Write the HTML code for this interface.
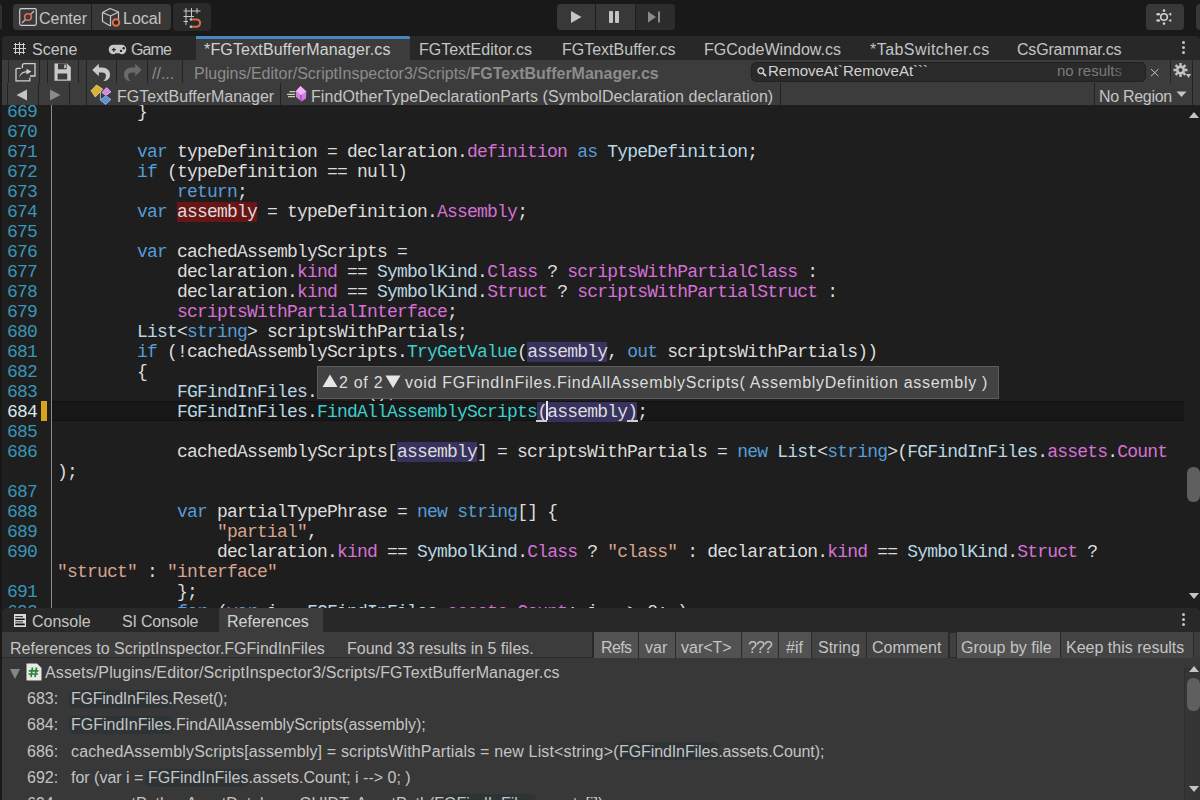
<!DOCTYPE html>
<html><head><meta charset="utf-8">
<style>
*{margin:0;padding:0;box-sizing:border-box}
html,body{width:1200px;height:800px;overflow:hidden;background:#191919;font-family:"Liberation Sans",sans-serif;color:#c4c4c4}
.a{position:absolute}
.t{position:absolute;white-space:pre;font-size:16px;line-height:23px}
/* top toolbar */
#top{left:0;top:0;width:1200px;height:36px;background:#191919}
.btn{position:absolute;background:#383838;border-radius:4px}
.btn2{position:absolute;background:#2a2a2a;border-radius:4px}
/* tab bar */
#tabs{left:2px;top:36px;width:1198px;height:24px;background:#282828;border-radius:4px 4px 0 0}
#acttab{left:196px;top:36px;width:214px;height:24px;background:#3c3c3c}
#acttab .bl{position:absolute;left:0;top:0;width:214px;height:3px;background:#4a85c4;border-radius:0 2px 0 0}
/* toolbars */
#tb{left:0;top:60px;width:1200px;height:45px;background:#3c3c3c}
.sep{position:absolute;width:1px;background:#232323}
/* code */
#code{left:0;top:105px;width:1200px;height:503px;background:#1e1e1e;overflow:hidden}
.ln{position:absolute;left:0;width:37px;text-align:right;font-family:"Liberation Mono",monospace;font-size:18px;letter-spacing:-0.8px;color:#3896b8;height:20px;line-height:22px}
.cl{position:absolute;left:57px;font-family:"Liberation Mono",monospace;font-size:18px;letter-spacing:-0.8px;white-space:pre;color:#dcdcdc;height:20px;line-height:22px}
.k{color:#569cd6}
.ty{color:#b8d7e3}
.p{color:#d670d6}
.m{color:#3ccfcf}
.s{color:#d8a48e}
.hl{background:#37335e}
.rd{background:#6a1515}
/* bottom panel */
#bp{left:0;top:608px;width:1200px;height:192px;background:#191919}
#bpres{left:2px;top:658px;width:1198px;height:142px;background:#383838}
#bptabs{left:2px;top:608px;width:1198px;height:24px;background:#282828;border-radius:4px 4px 0 0}
#bphdr{left:2px;top:632px;width:1198px;height:26px;background:#3c3c3c;border-bottom:1px solid #2a2a2a}
.fb{position:absolute;top:632px;height:26px;background:#525252}
.fb2{position:absolute;top:632px;height:26px;background:#434343}
.rh{position:absolute;background:#2e3436;border-radius:5px;height:18px}
</style></head><body>

<!-- TOP TOOLBAR -->
<div class="a" id="top"></div>
<div class="btn" style="left:-4px;top:4px;width:6px;height:26px;background:#303030"></div>
<div class="btn" style="left:13px;top:4px;width:158px;height:26px"></div>
<div class="a" style="left:91px;top:4px;width:1px;height:26px;background:#1e1e1e"></div>
<svg class="a" style="left:19px;top:8px" width="18" height="18" viewBox="0 0 18 18">
 <rect x="0.7" y="0.7" width="16.6" height="16.6" rx="1.5" fill="none" stroke="#d0d0d0" stroke-width="1.2"/>
 <line x1="3" y1="15" x2="15" y2="3" stroke="#c4c4c4" stroke-width="1.1"/>
 <circle cx="9" cy="9" r="3.3" fill="#3a3a3a" stroke="#d8705a" stroke-width="1.6"/>
</svg>
<div class="t" style="left:39px;top:7px">Center</div>
<svg class="a" style="left:100px;top:6px" width="22" height="22" viewBox="0 0 22 22">
 <path d="M2.5 6.5 L10 2.5 L18.5 6 L18.5 14 M2.5 6.5 L2.5 15.5 L10.5 20 M2.5 6.5 L10.5 10 L18.5 6 M10.5 10 L10.5 20" fill="none" stroke="#c8c8c8" stroke-width="1.2" stroke-linejoin="round"/>
 <circle cx="16" cy="16.5" r="3.3" fill="#2a2a2a" stroke="#e0704c" stroke-width="1.9"/>
</svg>
<div class="t" style="left:123px;top:7px">Local</div>
<div class="btn2" style="left:173px;top:3px;width:38px;height:28px"></div>
<svg class="a" style="left:182px;top:6px" width="22" height="22" viewBox="0 0 22 22">
 <path d="M4 2 V19 M9.5 2 V11.5 M15 2 V7.5 M1.5 5 H18.5 M1.5 10.5 H12 M1.5 15.5 H6" stroke="#c8c8c8" stroke-width="1" fill="none"/>
 <path d="M9.5 13.5 H14.5 A3.6 3.6 0 0 1 14.5 20.7 H9.5" stroke="#d8694a" stroke-width="2.1" fill="none"/>
 <rect x="7.8" y="12.4" width="2.2" height="2.2" fill="#c8c8c8"/><rect x="7.8" y="19.6" width="2.2" height="2.2" fill="#c8c8c8"/>
</svg>

<div class="btn" style="left:557px;top:4px;width:118px;height:26px"></div>
<div class="a" style="left:636px;top:4px;width:39px;height:26px;background:#2c2c2c;border-radius:0 4px 4px 0"></div>
<div class="a" style="left:595px;top:4px;width:1px;height:26px;background:#1e1e1e"></div>
<div class="a" style="left:635px;top:4px;width:1px;height:26px;background:#1e1e1e"></div>
<svg class="a" style="left:570px;top:10px" width="14" height="14" viewBox="0 0 14 14"><path d="M1 1 L11.5 7 L1 13 Z" fill="#c4c4c4"/></svg>
<div class="a" style="left:609px;top:11px;width:4px;height:12px;background:#c4c4c4;border-radius:1px"></div>
<div class="a" style="left:615px;top:11px;width:4px;height:12px;background:#c4c4c4;border-radius:1px"></div>
<svg class="a" style="left:646px;top:10px" width="16" height="14" viewBox="0 0 16 14"><path d="M2 1.5 L10 7 L2 12.5 Z" fill="#8a8a8a"/><rect x="12" y="1.5" width="2" height="11" fill="#8a8a8a"/></svg>

<div class="btn" style="left:1146px;top:4px;width:38px;height:26px"></div>
<div class="btn" style="left:1196px;top:4px;width:20px;height:26px"></div>
<svg class="a" style="left:1154px;top:7px" width="20" height="20" viewBox="0 0 20 20">
 <circle cx="10" cy="10" r="3.3" fill="none" stroke="#d0d0d0" stroke-width="1.6"/>
 <circle cx="10" cy="3.6" r="1.3" fill="#d0d0d0"/><circle cx="10" cy="16.6" r="1.3" fill="#d0d0d0"/>
 <ellipse cx="4.2" cy="7.2" rx="1.9" ry="1.2" fill="#d0d0d0"/><ellipse cx="4.2" cy="13.5" rx="1.9" ry="1.2" fill="#d0d0d0"/>
 <path d="M14.3 7.2 L17.2 5.6 L17.2 8.8Z M14.3 13.5 L17.2 11.9 L17.2 15.1Z" fill="#d0d0d0"/>
</svg>

<!-- TAB BAR -->
<div class="a" id="tabs"></div>
<div class="a" id="acttab"><div class="bl"></div></div>
<svg class="a" style="left:12px;top:41px" width="16" height="16" viewBox="0 0 16 16"><path d="M3.5 2 V13 M7.5 1 V14 M11.5 2 V13 M2 3.5 H13 M1 7.5 H14 M2 11.5 H13" stroke="#d0d0d0" stroke-width="1"/></svg>
<div class="t" style="left:32px;top:38px">Scene</div>
<svg class="a" style="left:108px;top:44px" width="20" height="11" viewBox="0 0 20 11">
 <path d="M5.5 0.7 H13.5 A4.8 4.8 0 0 1 13.5 10.3 Q12.3 10.3 11.6 9.3 H7.4 Q6.7 10.3 5.5 10.3 A4.8 4.8 0 0 1 5.5 0.7Z" fill="#c8c8c8"/>
 <path d="M3.8 5.7 H7.8 M5.8 3.7 V7.7" stroke="#282828" stroke-width="1.3"/>
 <circle cx="15.7" cy="4.3" r="1.2" fill="#282828"/><circle cx="13" cy="6.9" r="1.2" fill="#282828"/>
</svg>
<div class="t" style="left:131px;top:38px;letter-spacing:-0.9px">Game</div>
<div class="t" style="left:204px;top:38px;color:#d2d2d2;letter-spacing:0.16px">*FGTextBufferManager.cs</div>
<div class="t" style="left:419px;top:38px">FGTextEditor.cs</div>
<div class="t" style="left:562px;top:38px">FGTextBuffer.cs</div>
<div class="t" style="left:704px;top:38px">FGCodeWindow.cs</div>
<div class="t" style="left:870px;top:38px;letter-spacing:0.45px">*TabSwitcher.cs</div>
<div class="t" style="left:1017px;top:38px;letter-spacing:-0.2px">CsGrammar.cs</div>
<div class="a" style="left:1182px;top:41px;width:3px;height:3px;border-radius:2px;background:#c4c4c4"></div>
<div class="a" style="left:1182px;top:46px;width:3px;height:3px;border-radius:2px;background:#c4c4c4"></div>
<div class="a" style="left:1182px;top:51px;width:3px;height:3px;border-radius:2px;background:#c4c4c4"></div>

<!-- TOOLBARS -->
<div class="a" id="tb"></div>
<div class="a" style="left:0;top:60px;width:2px;height:45px;background:#191919"></div>
<div class="sep" style="left:8px;top:60px;height:23px"></div>
<div class="sep" style="left:39px;top:60px;height:23px"></div>
<div class="sep" style="left:47px;top:60px;height:23px"></div>
<div class="sep" style="left:78px;top:60px;height:23px"></div>
<div class="sep" style="left:86px;top:60px;height:23px"></div>
<div class="sep" style="left:116px;top:60px;height:23px"></div>
<div class="sep" style="left:147px;top:60px;height:23px"></div>
<div class="sep" style="left:182px;top:60px;height:23px"></div>
<!-- icons row1 -->
<svg class="a" style="left:15px;top:62px" width="22" height="20" viewBox="0 0 22 20">
 <path d="M7.4 6 V3.6 Q7.4 1.6 9.4 1.6 H20 V14 H15" fill="none" stroke="#cfcfcf" stroke-width="1.3"/>
 <path d="M6 6.3 H2.3 Q1 6.3 1 7.6 V18.9 H14.8 V15.5" fill="none" stroke="#cfcfcf" stroke-width="1.3"/>
 <path d="M4.3 15.2 C4.8 11.2 7.8 9.2 11.5 9.2 V6.8 L16.4 9.6 L11.5 12.6 V10.6 C8.5 10.6 6.2 12 4.3 15.2Z" fill="#cfcfcf"/>
</svg>
<svg class="a" style="left:54px;top:63px" width="17" height="18" viewBox="0 0 17 18">
 <path d="M0.5 0.5 H13 L16.8 4.3 V17.8 H0.5Z" fill="#cacaca"/>
 <rect x="4" y="0.5" width="8.7" height="5.8" fill="#3c3c3c"/><rect x="10.2" y="1.6" width="1.7" height="3.6" fill="#cacaca"/>
 <rect x="3.6" y="10.5" width="9.6" height="6" fill="#3c3c3c"/>
</svg>
<svg class="a" style="left:91px;top:63px" width="20" height="19" viewBox="0 0 20 19">
 <path d="M1.3 7 L7.8 0.8 V4.6 H11 C15.8 4.6 19 7.6 19 11.7 C19 15.3 16.8 17.7 13.2 17.9 L12.3 17.9 C14.3 16.6 14.9 14.6 14.9 12.6 C14.9 10.6 13.4 9.4 11.2 9.4 H7.8 V13.2Z" fill="#cacaca"/>
</svg>
<svg class="a" style="left:123px;top:63px" width="20" height="19" viewBox="0 0 20 19">
 <path d="M18.7 7 L12.2 0.8 V4.6 H9 C4.2 4.6 1 7.6 1 11.7 C1 15.3 3.2 17.7 6.8 17.9 L7.7 17.9 C5.7 16.6 5.1 14.6 5.1 12.6 C5.1 10.6 6.6 9.4 8.8 9.4 H12.2 V13.2Z" fill="#6a6a6a"/>
</svg>
<div class="t" style="left:152px;top:62px;color:#8c8c8c">//...</div>
<div class="t" style="left:194px;top:62px;color:#8c8c8c">Plugins/Editor/ScriptInspector3/Scripts/<b>FGTextBufferManager.cs</b></div>
<!-- search -->
<div class="a" style="left:751px;top:62px;width:395px;height:20px;background:#2a2a2a;border:1px solid #212121;border-radius:5px"></div>
<svg class="a" style="left:757px;top:67px" width="10" height="10" viewBox="0 0 10 10"><circle cx="3.8" cy="3.8" r="2.8" fill="none" stroke="#d0d0d0" stroke-width="1.4"/><path d="M5.8 5.8 L9 9" stroke="#d0d0d0" stroke-width="1.8"/></svg>
<div class="t" style="left:768px;top:59px;font-size:15px;color:#d2d2d2">RemoveAt`RemoveAt```</div>
<div class="t" style="left:1057px;top:59px;font-size:15px;color:#7a7a7a">no results</div>
<div class="a" style="left:1112px;top:63px;width:20px;height:18px;background:linear-gradient(90deg,rgba(42,42,42,0),#2a2a2a)"></div>
<svg class="a" style="left:1150px;top:68px" width="10" height="9" viewBox="0 0 10 9"><path d="M1 1 L8.5 8.2 M8.5 1 L1 8.2" stroke="#d0d0d0" stroke-width="0.9"/></svg>
<div class="sep" style="left:1170px;top:60px;height:23px"></div>
<div class="sep" style="left:1192px;top:60px;height:45px"></div>
<svg class="a" style="left:1173px;top:62.5px" width="20" height="16" viewBox="0 0 20 16">
 <g transform="translate(7.5 7)"><circle r="4.5" fill="#c4c4c4"/><circle r="2" fill="#3c3c3c"/>
 <path d="M-1.2 -7 H1.2 V-4 H-1.2Z M-1.2 7 H1.2 V4 H-1.2Z M-7 -1.2 V1.2 H-4 V-1.2Z M7 -1.2 V1.2 H4 V-1.2Z" fill="#c4c4c4"/>
 <path d="M-1.2 -7 H1.2 V-4 H-1.2Z M-1.2 7 H1.2 V4 H-1.2Z M-7 -1.2 V1.2 H-4 V-1.2Z M7 -1.2 V1.2 H4 V-1.2Z" fill="#c4c4c4" transform="rotate(45)"/></g>
 <path d="M13 11 H18 L15.5 15Z" fill="#c4c4c4"/>
</svg>
<!-- row2 -->
<div class="sep" style="left:7px;top:83px;height:22px"></div>
<div class="sep" style="left:38px;top:83px;height:22px"></div>
<div class="sep" style="left:69px;top:83px;height:22px"></div>
<div class="sep" style="left:86px;top:83px;height:22px"></div>
<div class="sep" style="left:280px;top:83px;height:22px"></div>
<div class="sep" style="left:780px;top:83px;height:22px"></div>
<div class="sep" style="left:1094px;top:83px;height:22px"></div>
<svg class="a" style="left:16px;top:89px" width="12" height="12" viewBox="0 0 12 12"><path d="M11 0.5 V11.5 L0.5 6Z" fill="#c4c4c4"/></svg>
<svg class="a" style="left:49px;top:89px" width="12" height="12" viewBox="0 0 12 12"><path d="M1 0.5 V11.5 L11.5 6Z" fill="#8a8a8a"/></svg>
<svg class="a" style="left:90px;top:84px" width="22" height="22" viewBox="0 0 22 22">
 <path d="M10.4 7.5 V16" stroke="#9fb0d0" stroke-width="1"/>
 <path d="M1.1 6.7 L6.5 1 L12.8 5.2 L5.3 13Z" fill="#d9b236" stroke="#f2dc86" stroke-width="0.8" stroke-linejoin="round"/>
 <path d="M16.7 3.6 L20.9 7.9 L15.8 11.5 L11.9 8.5Z" fill="#d488e6" stroke="#eab8f4" stroke-width="0.8" stroke-linejoin="round"/>
 <path d="M15.8 11.8 L20.9 15.4 L15.5 20.5 L10.4 16Z" fill="#5f8fd8" stroke="#a9c4ef" stroke-width="0.8" stroke-linejoin="round"/>
</svg>
<div class="t" style="left:117px;top:85px">FGTextBufferManager</div>
<svg class="a" style="left:287px;top:84px" width="22" height="20" viewBox="0 0 22 20">
 <path d="M2.5 7.6 H8.5 M0 10.3 H8 M1 12.7 H8" stroke="#c8d0b0" stroke-width="1.3"/>
 <path d="M13.5 2 L19.3 7.5 L19 14.5 L14.5 17.5 L9 13 L9 7Z" fill="#d27ee6"/>
 <path d="M13.5 2 L19.3 7.5 L14 11 L9 7Z" fill="#f2b2fa"/>
 <path d="M14 11 V17.5" stroke="#8a3aa6" stroke-width="1"/>
</svg>
<div class="t" style="left:311px;top:85px;letter-spacing:0.1px">FindOtherTypeDeclarationParts (SymbolDeclaration declaration)</div>
<div class="t" style="left:1099px;top:85px;letter-spacing:-0.3px">No Region</div>
<svg class="a" style="left:1176px;top:91px" width="11" height="7" viewBox="0 0 11 7"><path d="M0.5 0.5 H10.5 L5.5 6Z" fill="#c4c4c4"/></svg>

<!-- CODE -->
<!--CODE--><div class="a" id="code">
<div class="a" style="left:0;top:0;width:2px;height:503px;background:#171717"></div>
<div class="a" style="left:51px;top:0;width:1px;height:503px;background:#8a8a8a"></div>
<div class="ln" style="top:-4px;color:#3896b8">669</div>
<div class="cl" style="top:-4px">        }</div>
<div class="ln" style="top:16px;color:#3896b8">670</div>
<div class="ln" style="top:36px;color:#3896b8">671</div>
<div class="cl" style="top:36px">        <span class="k">var</span> typeDefinition = declaration.<span class="p">definition</span> <span class="k">as</span> <span class="ty">TypeDefinition</span>;</div>
<div class="ln" style="top:56px;color:#3896b8">672</div>
<div class="cl" style="top:56px">        <span class="k">if</span> (typeDefinition == null)</div>
<div class="ln" style="top:76px;color:#3896b8">673</div>
<div class="cl" style="top:76px">            <span class="k">return</span>;</div>
<div class="ln" style="top:96px;color:#3896b8">674</div>
<div class="cl" style="top:96px">        <span class="k">var</span> <span class="rd">assembly</span> = typeDefinition.<span class="p">Assembly</span>;</div>
<div class="ln" style="top:116px;color:#3896b8">675</div>
<div class="ln" style="top:136px;color:#3896b8">676</div>
<div class="cl" style="top:136px">        <span class="k">var</span> cachedAssemblyScripts =</div>
<div class="ln" style="top:156px;color:#3896b8">677</div>
<div class="cl" style="top:156px">            declaration.<span class="p">kind</span> == <span class="ty">SymbolKind</span>.<span class="p">Class</span> ? <span class="p">scriptsWithPartialClass</span> :</div>
<div class="ln" style="top:176px;color:#3896b8">678</div>
<div class="cl" style="top:176px">            declaration.<span class="p">kind</span> == <span class="ty">SymbolKind</span>.<span class="p">Struct</span> ? <span class="p">scriptsWithPartialStruct</span> :</div>
<div class="ln" style="top:196px;color:#3896b8">679</div>
<div class="cl" style="top:196px">            <span class="p">scriptsWithPartialInterface</span>;</div>
<div class="ln" style="top:216px;color:#3896b8">680</div>
<div class="cl" style="top:216px">        <span class="ty">List</span>&lt;<span class="k">string</span>&gt; scriptsWithPartials;</div>
<div class="ln" style="top:236px;color:#3896b8">681</div>
<div class="cl" style="top:236px">        <span class="k">if</span> (!cachedAssemblyScripts.<span class="m">TryGetValue</span>(<span class="hl">assembly</span>, <span class="k">out</span> scriptsWithPartials))</div>
<div class="ln" style="top:256px;color:#3896b8">682</div>
<div class="cl" style="top:256px">        {</div>
<div class="ln" style="top:276px;color:#3896b8">683</div>
<div class="cl" style="top:276px">            <span class="ty">FGFindInFiles</span>.<span class="m">Reset</span>();</div>
<div class="a" style="left:52px;top:296px;width:1132px;height:20px;background:#171717;border-top:1px solid #111;border-bottom:1px solid #111"></div>
<div class="a" style="left:41px;top:296px;width:6px;height:20px;background:#d6a51a"></div>
<div class="ln" style="top:296px;color:#d4e8ee">684</div>
<div class="cl" style="top:296px">            <span class="ty">FGFindInFiles</span>.<span class="m">FindAllAssemblyScripts</span><span class="hl">(assembly)</span>;</div>
<div class="ln" style="top:316px;color:#3896b8">685</div>
<div class="ln" style="top:336px;color:#3896b8">686</div>
<div class="cl" style="top:336px">            cachedAssemblyScripts[<span class="hl">assembly</span>] = scriptsWithPartials = <span class="k">new</span> <span class="ty">List</span>&lt;<span class="k">string</span>&gt;(<span class="ty">FGFindInFiles</span>.<span class="p">assets</span>.<span class="p">Count</span></div>
<div class="cl" style="top:356px">);</div>
<div class="ln" style="top:376px;color:#3896b8">687</div>
<div class="ln" style="top:396px;color:#3896b8">688</div>
<div class="cl" style="top:396px">            <span class="k">var</span> partialTypePhrase = <span class="k">new</span> <span class="k">string</span>[] {</div>
<div class="ln" style="top:416px;color:#3896b8">689</div>
<div class="cl" style="top:416px">                <span class="s">&quot;partial&quot;</span>,</div>
<div class="ln" style="top:436px;color:#3896b8">690</div>
<div class="cl" style="top:436px">                declaration.<span class="p">kind</span> == <span class="ty">SymbolKind</span>.<span class="p">Class</span> ? <span class="s">&quot;class&quot;</span> : declaration.<span class="p">kind</span> == <span class="ty">SymbolKind</span>.<span class="p">Struct</span> ?</div>
<div class="cl" style="top:456px"><span class="s">&quot;struct&quot;</span> : <span class="s">&quot;interface&quot;</span></div>
<div class="ln" style="top:476px;color:#3896b8">691</div>
<div class="cl" style="top:476px">            };</div>
<div class="ln" style="top:496px;color:#3896b8">692</div>
<div class="cl" style="top:496px">            <span class="k">for</span> (<span class="k">var</span> i = <span class="ty">FGFindInFiles</span>.<span class="p">assets</span>.<span class="p">Count</span>; i --&gt; 0; )</div>
</div>
<!--/CODE-->
<!-- BOTTOM PANEL -->
<div class="a" id="bp"></div>
<div class="a" id="bpres"></div>
<div class="a" id="bptabs"></div>
<div class="a" style="left:219px;top:608px;width:104px;height:24px;background:#3c3c3c"></div>
<div class="a" id="bphdr"></div>
<div class="a" style="left:0;top:632px;width:2px;height:168px;background:#191919"></div>
<svg class="a" style="left:14px;top:614px" width="12" height="13" viewBox="0 0 12 13"><rect x="0" y="0" width="12" height="13" fill="#d8d8d8"/><path d="M1.3 2.6 H9 M1.3 7.8 H9" stroke="#1a1a1a" stroke-width="0.9"/><path d="M1.3 5.2 H10.7 M1.3 10.4 H10.7" stroke="#111" stroke-width="1.6"/></svg>
<div class="t" style="left:32px;top:610px">Console</div>
<div class="t" style="left:122px;top:610px;letter-spacing:-0.2px">SI Console</div>
<div class="t" style="left:227px;top:610px;color:#d2d2d2">References</div>
<div class="a" style="left:1182px;top:613px;width:3px;height:3px;border-radius:2px;background:#c4c4c4"></div>
<div class="a" style="left:1182px;top:618px;width:3px;height:3px;border-radius:2px;background:#c4c4c4"></div>
<div class="a" style="left:1182px;top:623px;width:3px;height:3px;border-radius:2px;background:#c4c4c4"></div>
<div class="t" style="left:10px;top:637px">References to ScriptInspector.FGFindInFiles</div>
<div class="t" style="left:347px;top:637px">Found 33 results in 5 files.</div>
<div class="a" style="left:592px;top:632px;width:602px;height:26px;background:#2a2a2a"></div>
<div class="fb" style="left:594px;width:44px"></div>
<div class="fb" style="left:639px;width:36px"></div>
<div class="fb" style="left:676px;width:65px"></div>
<div class="fb" style="left:742px;width:36px"></div>
<div class="fb" style="left:779px;width:32px"></div>
<div class="fb2" style="left:812px;width:54px"></div>
<div class="fb2" style="left:867px;width:81px"></div>
<div class="fb2" style="left:950px;width:6px;top:633px;height:24px;background:#404040"></div>
<div class="fb" style="left:957px;width:103px"></div>
<div class="fb2" style="left:1061px;width:132px"></div>
<div class="a" style="left:1194px;top:632px;width:6px;height:26px;background:#3c3c3c"></div>
<div class="t" style="left:601px;top:636px;letter-spacing:-0.6px">Refs</div>
<div class="t" style="left:645px;top:636px">var</div>
<div class="t" style="left:681px;top:636px">var&lt;T&gt;</div>
<div class="t" style="left:748px;top:636px;letter-spacing:-1px">???</div>
<div class="t" style="left:786px;top:636px">#if</div>
<div class="t" style="left:818px;top:636px">String</div>
<div class="t" style="left:872px;top:636px">Comment</div>
<div class="t" style="left:961px;top:636px">Group by file</div>
<div class="t" style="left:1066px;top:636px">Keep this results</div>
<!-- results -->
<svg class="a" style="left:10px;top:669px" width="10" height="10" viewBox="0 0 10 10"><path d="M0 0 H10 L5 10Z" fill="#858585"/></svg>
<svg class="a" style="left:26px;top:663px" width="16" height="18" viewBox="0 0 16 18"><path d="M0.5 0.5 H11 L15.5 5 V17.5 H0.5Z" fill="#e8e8e8"/><path d="M6.5 4.5 L5 14 M10.5 4.5 L9 14 M2.8 7.8 H12.5 M2.5 11 H12" stroke="#2e8435" stroke-width="1.7"/></svg>
<div class="t" style="left:45px;top:661px;letter-spacing:0.13px">Assets/Plugins/Editor/ScriptInspector3/Scripts/FGTextBufferManager.cs</div>
<div class="rh" style="left:69px;top:690px;width:104px"></div>
<div class="rh" style="left:69px;top:716px;width:104px"></div>
<div class="rh" style="left:145px;top:769px;width:103px"></div>
<div class="rh" style="left:617px;top:742px;width:102px"></div>
<div class="t" style="left:27px;top:687px">683:</div>
<div class="t" style="left:71px;top:687px;letter-spacing:-0.25px">FGFindInFiles.Reset();</div>
<div class="t" style="left:27px;top:713px">684:</div>
<div class="t" style="left:71px;top:713px">FGFindInFiles.FindAllAssemblyScripts(assembly);</div>
<div class="t" style="left:27px;top:740px">686:</div>
<div class="t" style="left:71px;top:740px;letter-spacing:0.157px">cachedAssemblyScripts[assembly] = scriptsWithPartials = new List&lt;string&gt;(</div>
<div class="t" style="left:619px;top:740px;letter-spacing:-0.1px">FGFindInFiles.assets.Count);</div>
<div class="t" style="left:27px;top:766px">692:</div>
<div class="t" style="left:71px;top:766px">for (var i = FGFindInFiles.assets.Count; i --&gt; 0; )</div>
<div class="rh" style="left:436px;top:794px;width:100px"></div>
<div class="t" style="left:27px;top:792px">694:</div>
<div class="t" style="left:71px;top:792px">var assetPath = AssetDatabase.GUIDToAssetPath(FGFindInFiles.assets[i]);</div>
<!-- results scrollbar -->
<div class="a" style="left:1184px;top:668px;width:16px;height:132px;background:#353535;border-left:1px solid #2e2e2e;border-top:1px solid #2e2e2e"></div>
<svg class="a" style="left:1189px;top:666px" width="10" height="6" viewBox="0 0 10 6"><path d="M0 6 H10 L5 0Z" fill="#c4c4c4"/></svg>
<div class="a" style="left:1187px;top:678px;width:13px;height:33px;border-radius:6px;background:#5f5f5f"></div>
<svg class="a" style="left:1189px;top:786px" width="10" height="6" viewBox="0 0 10 6"><path d="M0 0 H10 L5 6Z" fill="#c4c4c4"/></svg>
<!-- code scrollbar -->
<svg class="a" style="left:1189px;top:112px" width="10" height="6" viewBox="0 0 10 6"><path d="M0 6 H10 L5 0Z" fill="#c4c4c4"/></svg>
<div class="a" style="left:1187px;top:467px;width:13px;height:35px;border-radius:6px;background:#5f5f5f"></div>
<svg class="a" style="left:1189px;top:593px" width="10" height="6" viewBox="0 0 10 6"><path d="M0 0 H10 L5 6Z" fill="#c4c4c4"/></svg>
<!-- tooltip -->
<div class="a" style="left:317px;top:366px;width:682px;height:33px;background:#424242;border:1px solid #5c5c5c"></div>
<svg class="a" style="left:322px;top:374px" width="16" height="14" viewBox="0 0 16 14"><path d="M8 0.5 L15.5 13 H0.5Z" fill="#e6e6e6"/></svg>
<div class="t" style="left:339px;top:371px;color:#dcdcdc;letter-spacing:0.7px">2 of 2</div>
<svg class="a" style="left:385px;top:375px" width="16" height="14" viewBox="0 0 16 14"><path d="M0.5 0.5 H15.5 L8 13Z" fill="#e6e6e6"/></svg>
<div class="t" style="left:405px;top:371px;color:#dcdcdc;letter-spacing:0.7px">void FGFindInFiles.FindAllAssemblyScripts( AssemblyDefinition assembly )</div>
<!-- cursor -->
<div class="a" style="left:546px;top:401px;width:1.5px;height:19px;background:#e8e8e8"></div>
<div class="a" style="left:536px;top:420px;width:11px;height:1.5px;background:#cfcfcf"></div>
<div class="a" style="left:627px;top:420px;width:11px;height:1.5px;background:#cfcfcf"></div>
</body></html>
